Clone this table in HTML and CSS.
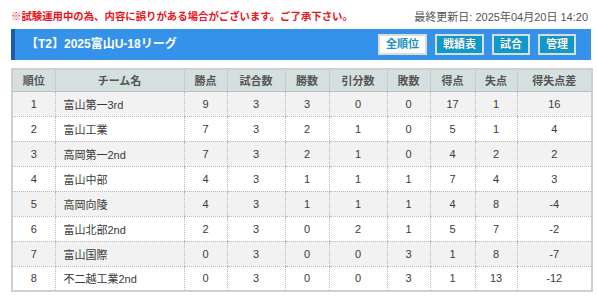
FILE: index.html
```html
<!DOCTYPE html>
<html lang="ja">
<head>
<meta charset="utf-8">
<link rel="stylesheet" href="styles.css">
</head>
<body>
<div class="wrap">
  <div class="top">
    <span class="notice">※試験運用中の為、内容に誤りがある場合がございます。ご了承下さい。</span>
    <span class="updated">最終更新日: 2025年04月20日 14:20</span>
  </div>
  <div class="bar">
    <h1 class="title">【T2】2025富山U-18リーグ</h1>
    <div class="btns">
      <a class="btn btn-active">全順位</a>
      <a class="btn">戦績表</a>
      <a class="btn">試合</a>
      <a class="btn">管理</a>
    </div>
  </div>
  <table class="standings">
    <colgroup>
      <col class="c-rank"><col class="c-team"><col class="c-pts"><col class="c-gp"><col class="c-w"><col class="c-d"><col class="c-l"><col class="c-gf"><col class="c-ga"><col class="c-gd">
    </colgroup>
    <thead>
      <tr><th>順位</th><th>チーム名</th><th>勝点</th><th>試合数</th><th>勝数</th><th>引分数</th><th>敗数</th><th>得点</th><th>失点</th><th>得失点差</th></tr>
    </thead>
    <tbody>
      <tr><td>1</td><td class="team">富山第一3rd</td><td>9</td><td>3</td><td>3</td><td>0</td><td>0</td><td>17</td><td>1</td><td>16</td></tr>
      <tr><td>2</td><td class="team">富山工業</td><td>7</td><td>3</td><td>2</td><td>1</td><td>0</td><td>5</td><td>1</td><td>4</td></tr>
      <tr><td>3</td><td class="team">高岡第一2nd</td><td>7</td><td>3</td><td>2</td><td>1</td><td>0</td><td>4</td><td>2</td><td>2</td></tr>
      <tr><td>4</td><td class="team">富山中部</td><td>4</td><td>3</td><td>1</td><td>1</td><td>1</td><td>7</td><td>4</td><td>3</td></tr>
      <tr><td>5</td><td class="team">高岡向陵</td><td>4</td><td>3</td><td>1</td><td>1</td><td>1</td><td>4</td><td>8</td><td>-4</td></tr>
      <tr><td>6</td><td class="team">富山北部2nd</td><td>2</td><td>3</td><td>0</td><td>2</td><td>1</td><td>5</td><td>7</td><td>-2</td></tr>
      <tr><td>7</td><td class="team">富山国際</td><td>0</td><td>3</td><td>0</td><td>0</td><td>3</td><td>1</td><td>8</td><td>-7</td></tr>
      <tr><td>8</td><td class="team">不二越工業2nd</td><td>0</td><td>3</td><td>0</td><td>0</td><td>3</td><td>1</td><td>13</td><td>-12</td></tr>
    </tbody>
  </table>
</div>
</body>
</html>
```
FILE: styles.css
```css
* { box-sizing: border-box; }
html, body { margin: 0; padding: 0; background: #fff; }
body {
  font-family: "Liberation Sans", "Noto Sans CJK JP", sans-serif;
  color: #333;
}
.wrap {
  width: 580px;
  margin-left: 11px;
  padding-top: 10px;
}
.top {
  display: flex;
  justify-content: space-between;
  align-items: center;
  height: 14px;
  margin-bottom: 5px;
}
.notice {
  color: #e8141e;
  font-weight: bold;
  font-size: 10.4px;
  line-height: 14px;
}
.updated {
  color: #555;
  font-size: 11px;
  line-height: 14px;
  margin-right: 3px;
}
.bar {
  display: flex;
  align-items: center;
  justify-content: space-between;
  height: 31px;
  background: #3592ea;
  border-left: 4px solid #1d5ba6;
  padding: 0 15px 0 11px;
  margin-bottom: 8px;
}
.title {
  margin: 0;
  color: #fff;
  font-size: 12px;
  font-weight: bold;
  line-height: 31px;
}
.btns {
  display: flex;
  gap: 8px;
}
.btn {
  display: block;
  height: 21px;
  line-height: 17px;
  padding: 0 6px;
  border: 2px solid #dcdcdc;
  background: #0d99c9;
  color: #fff;
  font-size: 11px;
  font-weight: bold;
  text-shadow: 0 0 1px rgba(0,0,0,.4);
}
.btn-active {
  background: #fff;
  color: #1d8fc4;
  text-shadow: none;
}
.standings {
  width: 580px;
  border-collapse: collapse;
  table-layout: fixed;
  border: 2px solid #cfcfcf;
  font-size: 11px;
}
.c-rank { width: 43px; }
.c-team { width: 129px; }
.c-pts { width: 43px; }
.c-gp { width: 58px; }
.c-w { width: 44px; }
.c-d { width: 58px; }
.c-l { width: 43px; }
.c-gf { width: 45px; }
.c-ga { width: 42px; }
.c-gd { width: 75px; }
.standings th {
  height: 22px;
  background: #d4dfdf;
  color: #555;
  font-weight: bold;
  border-bottom: 1px solid #bdbdbd;
  border-left: 1px dotted #bbb;
  padding: 0;
  text-align: center;
}
.standings td {
  height: 25px;
  padding: 0;
  text-align: center;
  border-left: 1px dotted #bbb;
  border-bottom: 1px dotted #bbb;
  color: #3a3a3a;
}
.standings th:first-child, .standings td:first-child { border-left: none; }
.standings tbody tr:nth-child(odd) td { background: #f2f2f2; }
.standings td.team {
  text-align: left;
  padding-left: 8px;
}
```
